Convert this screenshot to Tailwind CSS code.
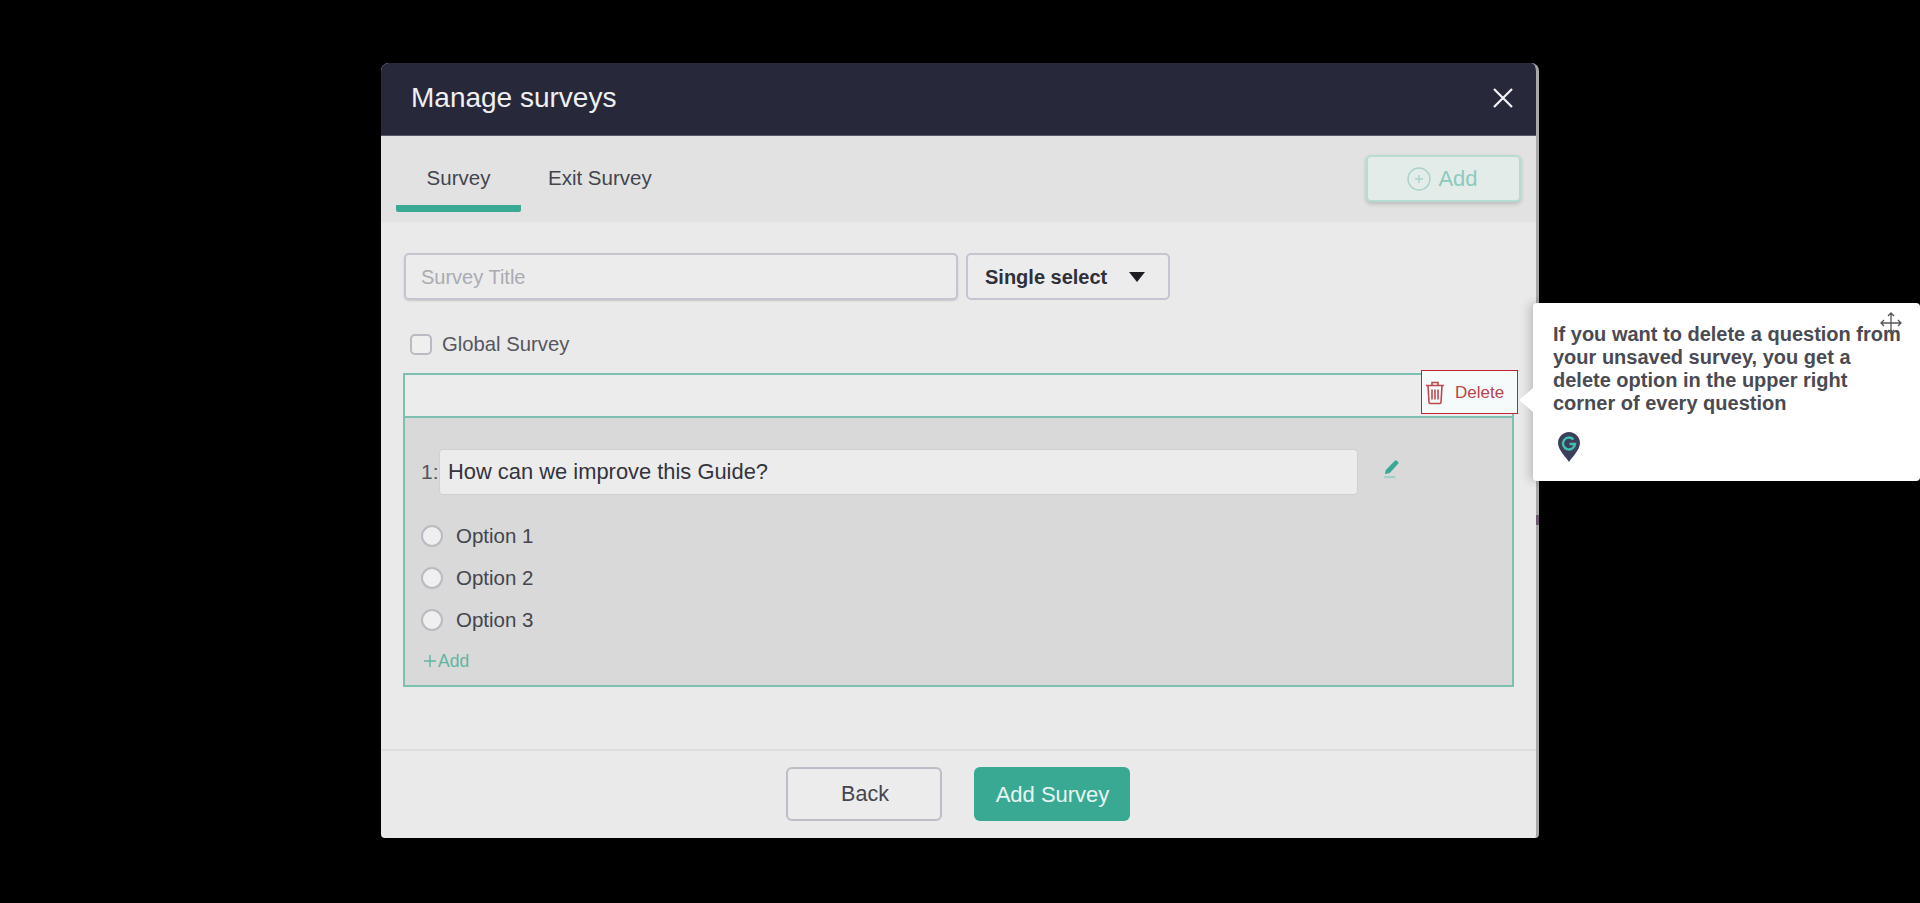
<!DOCTYPE html>
<html lang="en">
<head>
  <meta charset="UTF-8" />
  <title>Manage surveys</title>
  <script src="https://cdn.jsdelivr.net/npm/@tailwindcss/browser@4"></script>
</head>
<body class="bg-black font-['Liberation_Sans',Arial,sans-serif]">
<div class="relative h-[903px] w-[1920px] overflow-hidden pl-[381px] pt-[63px]">

  <!-- Modal -->
  <div class="flex h-[775px] w-[1158px] flex-col overflow-hidden rounded-t-[8px] rounded-b-[4px] bg-[#eaeaea] border-r-[3px] border-[#a8a8a8]">

    <!-- Header -->
    <div class="flex h-[73px] shrink-0 items-center justify-between bg-[#27293b] pb-[2px] pl-[30px] pr-[22px] border-b border-[#55566a]">
      <h1 class="text-[28px] text-[#f0f0f2]">Manage surveys</h1>
      <svg class="mb-[1px] h-[22px] w-[22px]" viewBox="0 0 22 22" fill="none" stroke="#f4f4f6" stroke-width="2.2"><path d="M2 2 20 20M20 2 2 20"/></svg>
    </div>

    <!-- Tabs -->
    <div class="flex h-[86px] shrink-0 items-start justify-between bg-[#e2e2e2] pl-[15px] pr-[15px]">
      <div class="flex">
        <div class="flex h-[76px] w-[125px] items-center justify-center border-b-[7px] border-[#3aa994] rounded-b-[2px] pt-[15px] text-[20.5px] text-[#44444e]">Survey</div>
        <div class="ml-[27px] flex h-[76px] items-center pt-[8px] text-[20.5px] text-[#44444e]">Exit Survey</div>
      </div>
      <button class="mt-[19px] flex h-[47px] w-[155px] items-center justify-center gap-[7px] rounded-[5px] border-2 border-[#b6dcd4] bg-[#e4ecea] pr-[2px] text-[22px] text-[#8ccabd] shadow-[0_2px_4px_rgba(0,0,0,0.18)]">
        <svg class="h-[24px] w-[24px]" viewBox="0 0 24 24" fill="none" stroke="#a9d3ca" stroke-width="1.4"><circle cx="12" cy="12" r="11"/><path d="M12 8v8M8 12h8"/></svg>
        Add
      </button>
    </div>

    <!-- Body -->
    <div class="flex-1 px-[23px] pt-[31px]">
      <div class="flex gap-[8px]">
        <div class="flex h-[47px] w-[554px] items-center rounded-[5px] border-2 border-[#c3c5d0] bg-[#ececec] pl-[15px] text-[20px] text-[#a9abb3] shadow-[0_1px_2px_rgba(0,0,0,0.15)]">Survey Title</div>
        <div class="flex h-[47px] w-[204px] items-center rounded-[5px] border-2 border-[#c3c5d0] bg-[#ececec] pl-[17px] text-[20px] font-bold text-[#2f3038]">
          Single select
          <svg class="ml-[22px] h-[10px] w-[16px]" viewBox="0 0 16 10" fill="#1c1c22"><path d="M0 0h16L8 10z"/></svg>
        </div>
      </div>

      <div class="mt-[34px] flex h-[21px] items-center pl-[6px]">
        <span class="h-[21px] w-[22px] rounded-[5px] border-2 border-[#b9bac2] bg-[#efefef]"></span>
        <span class="ml-[10px] text-[20.3px] text-[#55565e]">Global Survey</span>
      </div>

      <!-- Question box -->
      <div class="mt-[18px] ml-[-1px] h-[314px] w-[1111px] border-2 border-[#7dbfb0]">
        <div class="h-[43px] border-b-2 border-[#7dbfb0] bg-[#ececec]"></div>
        <div class="h-[267px] bg-[#d9d9d9] pl-[16px] pt-[31px]">
          <div class="flex h-[46px] items-center">
            <span class="w-[18px] text-[21px] text-[#55565e]">1:</span>
            <div class="flex h-[46px] w-[919px] items-center rounded-[4px] bg-[#ececec] pl-[8px] text-[21.9px] text-[#33343c] border border-[#d0d0d0]">How can we improve this Guide?</div>
            <svg class="mb-[7px] ml-[25px] h-[20px] w-[18px]" viewBox="0 0 16 18" fill="#3aa994"><path d="M2.5 10 10.5 1.5c1.2-1 4 1.2 3.2 2.6L6 12.6 1.6 13.6z"/><rect x="1" y="15.4" width="10" height="1.8" fill="#9fd0c5"/></svg>
          </div>

          <div class="mt-[29px] flex h-[24px] items-center">
            <span class="h-[22px] w-[22px] rounded-full border-2 border-[#b9bac2] bg-[#efefef]"></span>
            <span class="ml-[13px] text-[20.5px] text-[#44454d]">Option 1</span>
          </div>
          <div class="mt-[18px] flex h-[24px] items-center">
            <span class="h-[22px] w-[22px] rounded-full border-2 border-[#b9bac2] bg-[#efefef]"></span>
            <span class="ml-[13px] text-[20.5px] text-[#44454d]">Option 2</span>
          </div>
          <div class="mt-[18px] flex h-[24px] items-center">
            <span class="h-[22px] w-[22px] rounded-full border-2 border-[#b9bac2] bg-[#efefef]"></span>
            <span class="ml-[13px] text-[20.5px] text-[#44454d]">Option 3</span>
          </div>
          <div class="mt-[17px] flex h-[24px] items-center pl-[2px] text-[17.5px] text-[#5fb5a4]">
            <svg class="mr-[1px] h-[14px] w-[14px]" viewBox="0 0 14 14" fill="none" stroke="#5fb5a4" stroke-width="1.4"><path d="M7 1v12M1 7h12"/></svg>
            Add
          </div>
        </div>
      </div>
    </div>

    <!-- Footer -->
    <div class="flex h-[89px] shrink-0 justify-center gap-[32px] border-t-2 border-[#dedede] pt-[16px] pr-[1px]">
      <button class="h-[54px] w-[156px] rounded-[6px] border-2 border-[#bcbdc6] bg-[#ececec] pl-[2px] text-[21.5px] text-[#44454f]">Back</button>
      <button class="h-[54px] w-[156px] rounded-[6px] bg-[#3aa994] pl-[1px] text-[22px] text-[#e8f5f2]">Add Survey</button>
    </div>
  </div>

  <!-- Highlighted delete control -->
  <div class="absolute left-[1421px] top-[370px] flex h-[44px] w-[97px] items-center border border-[#c3222a] bg-[#f4fbfa] pl-[3px] pt-[1px]">
    <svg class="h-[25px] w-[20px]" viewBox="0 0 20 24" fill="none" stroke="#c0484c" stroke-width="1.6"><path d="M1 5h18M7 5V2h6v3M3 5l1 17q0 1 1 1h10q1 0 1-1l1-17"/><path d="M7 9v10M10 9v10M13 9v10"/></svg>
    <span class="ml-[10px] text-[17px] text-[#b8444a]">Delete</span>
  </div>

  <!-- Guide tooltip -->
  <div class="absolute left-[1533px] top-[303px] h-[178px] w-[387px] rounded-[4px] bg-white pl-[20px] pt-[20px] shadow-[-4px_0_10px_rgba(0,0,0,0.18)]">
    <span class="absolute left-[-14px] top-[85px] h-0 w-0 border-y-[12px] border-r-[14px] border-y-transparent border-r-white"></span>
    <p class="w-[352px] text-[20px] font-bold leading-[23px] text-[#4a4b52]">If you want to delete a question from your unsaved survey, you get a delete option in the upper right corner of every question</p>
    <svg class="absolute left-[25px] top-[129px] h-[30px] w-[22px]" viewBox="0 0 22 30">
      <path d="M11 0C5 0 0 5 0 11c0 7 8 14 11 19 3-5 11-12 11-19C22 5 17 0 11 0z" fill="#3c3f5b"/>
      <path d="M15.5 7.5A6 6 0 1 0 17 12h-5.5" fill="none" stroke="#3fc1ae" stroke-width="2.4"/>
    </svg>
  </div>

  <!-- Move cursor -->
  <svg class="absolute left-[1880px] top-[312px] h-[22px] w-[22px]" viewBox="0 0 22 22" fill="none" stroke="#55565c" stroke-width="1.3"><path d="M11 1v20M1 11h20M8 4l3-3 3 3M8 18l3 3 3-3M4 8l-3 3 3 3M18 8l3 3-3 3"/></svg>

  <!-- Stray mark on the modal edge -->
  <span class="absolute left-[1536px] top-[515px] h-[10px] w-[3px] bg-[#6b5a70]"></span>

</div>
</body>
</html>
